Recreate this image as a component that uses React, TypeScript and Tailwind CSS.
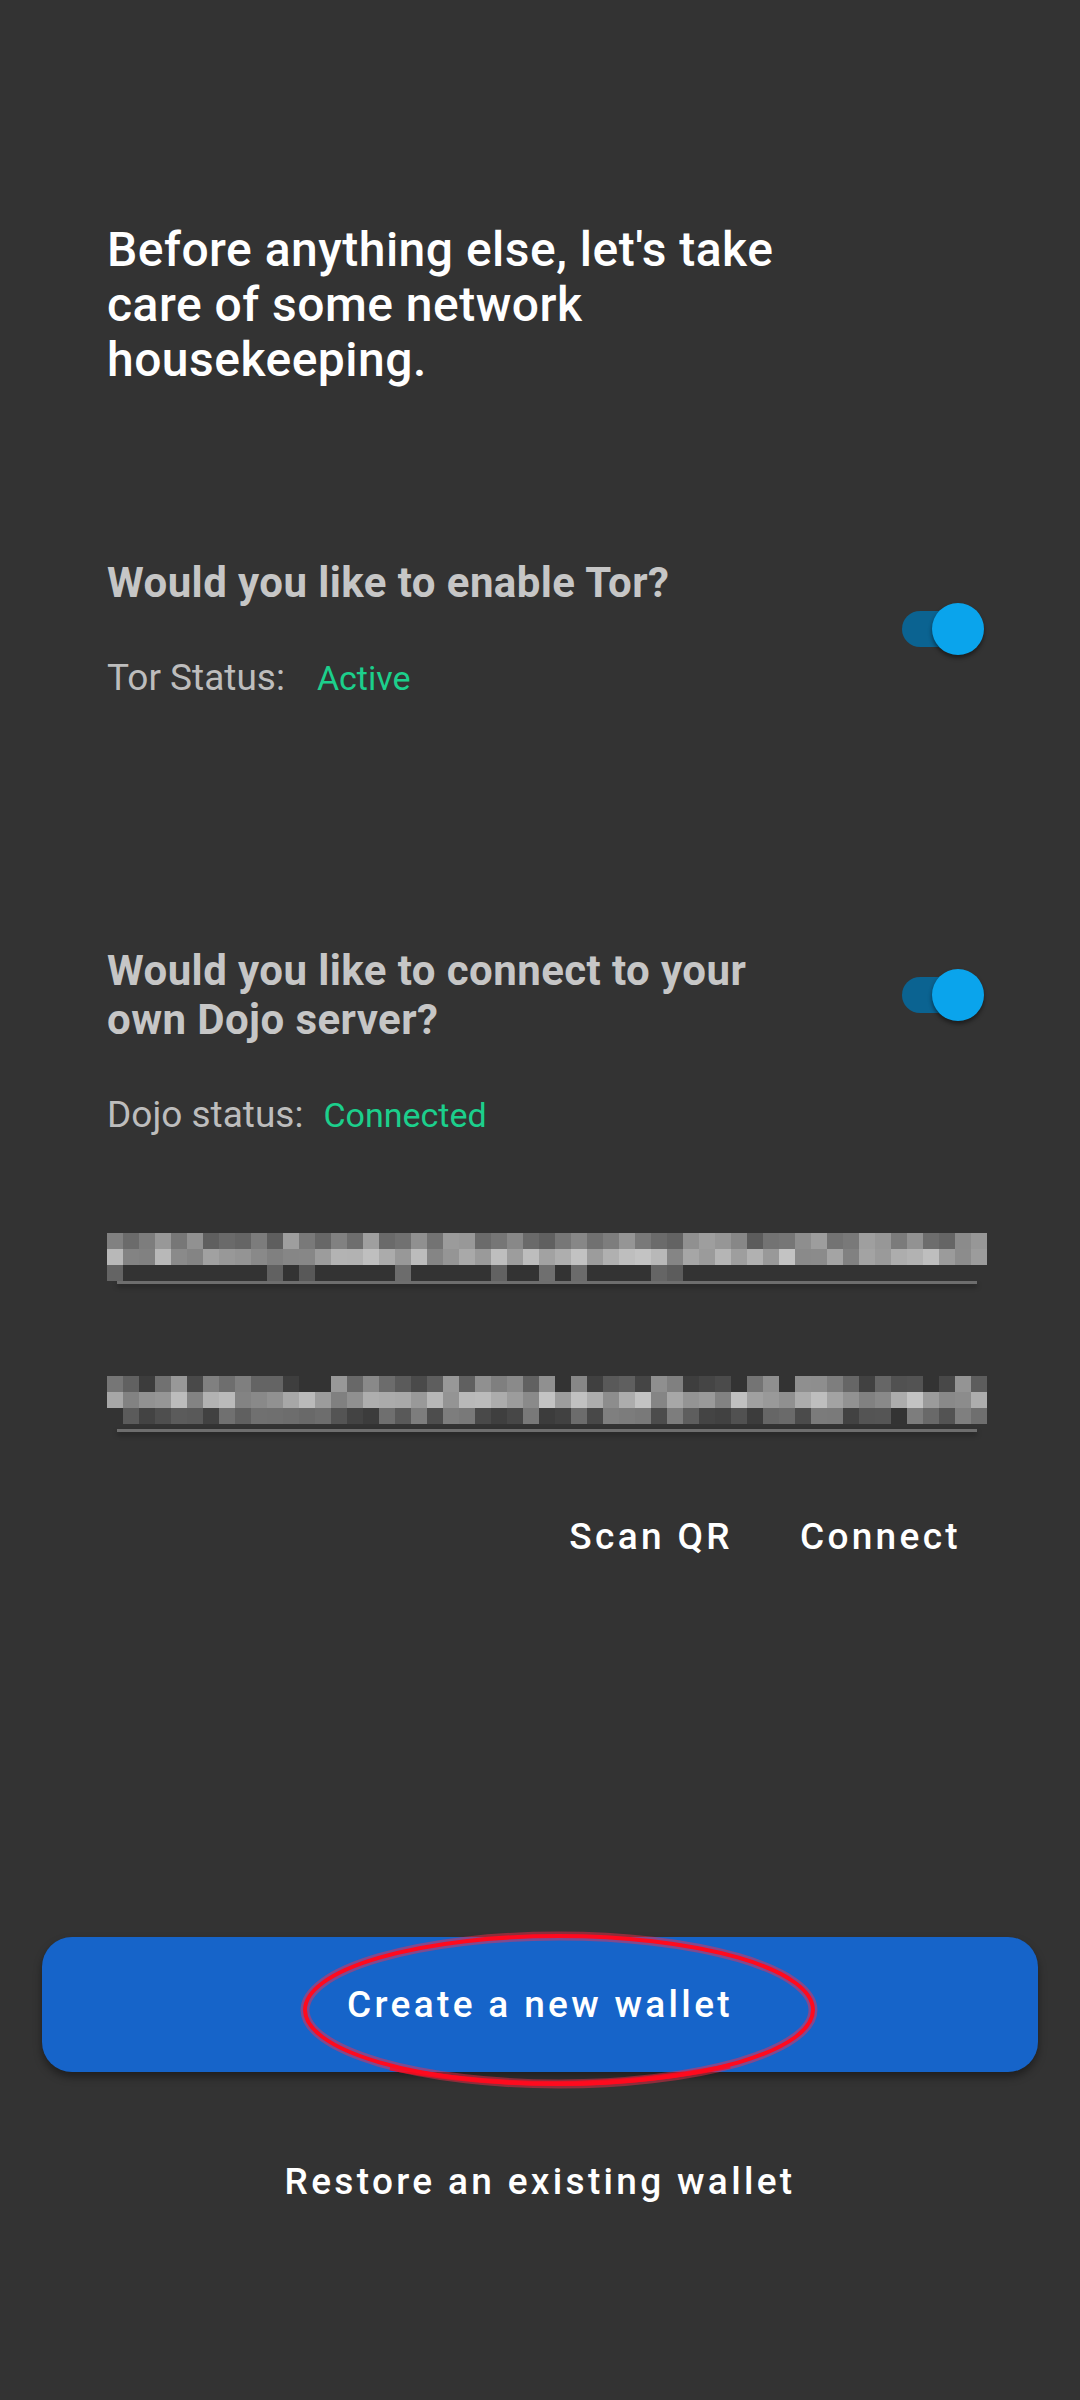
import React from 'react';

// deterministic noise for the blurred (pixelated) input values
function rand(seed: number) {
	let s = seed;
	return () => {
		s = (s * 9301 + 49297) % 233280;
		return s / 233280;
	};
}

function grayHex(v: number) {
	const h = Math.round(v).toString(16).padStart(2, '0');
	return `#${h}${h}${h}`;
}

function Pixelated({ seed, rows }: { seed: number; rows: [number, number, number, number][] }) {
	const r = rand(seed);
	return (
		<div className="flex flex-col">
			{rows.map(([min, max, emptyChance, cols], ri) => (
				<div key={ri} className="flex h-[16px]">
					{Array.from({ length: 55 }).map((_, ci) => {
						const empty = ci >= cols || r() < emptyChance;
						const v = empty ? 0x33 : min + r() * (max - min);
						return <div key={ci} className="w-[16px] h-[16px]" style={{ background: grayHex(v) }} />;
					})}
				</div>
			))}
		</div>
	);
}

function Toggle() {
	return (
		<div className="relative w-[82px] h-[52px] shrink-0">
			<div className="absolute left-0 top-[8px] h-[36px] w-[72px] rounded-full bg-[#0b6391]" />
			<div className="absolute right-0 top-0 h-[52px] w-[52px] rounded-full bg-[#0aa4ec] shadow-[0_3px_4px_rgba(0,0,0,0.45)]" />
		</div>
	);
}

export default function App() {
	return (
		<div className="min-h-[2400px] bg-[#333333] font-['Roboto',sans-serif]">
			<div className="pl-[107px] pr-[96px] pt-[222px]">
				<h1 className="w-[720px] text-[48px] leading-[55px] font-medium tracking-[0.01em] text-white">
					Before anything else, let's take care of some network housekeeping.
				</h1>

				<div className="flex items-center justify-between mt-[171px]">
					<div>
						<div className="text-[42px] leading-[49px] font-bold tracking-[0.01em] text-[#c6c6c6]">Would you like to enable Tor?</div>
						<div className="mt-[49px] text-[37px] leading-[43px] text-[#bdbdbd]">
							Tor Status:<span className="ml-[32px] text-[34px] text-[#1ccf8c]">Active</span>
						</div>
					</div>
					<Toggle />
				</div>

				<div className="flex items-center justify-between mt-[246px]">
					<div className="w-[690px] text-[42px] leading-[49px] font-bold tracking-[0.01em] text-[#c6c6c6]">
						Would you like to connect to your own Dojo server?
					</div>
					<Toggle />
				</div>
				<div className="mt-[49px] text-[37px] leading-[43px] text-[#bdbdbd]">
					Dojo status:<span className="ml-[20px] text-[34px] text-[#1ccf8c]">Connected</span>
				</div>

				<div className="mt-[96px] w-[880px]">
					<Pixelated seed={7} rows={[[0x5a, 0xa0, 0, 55], [0x80, 0xc4, 0, 55], [0x55, 0x70, 0.65, 37]]} />
					<div className="mx-[10px] h-[3px] bg-[#6e6e6e] shadow-[0_3px_5px_rgba(0,0,0,0.35)]" />
				</div>

				<div className="mt-[92px] w-[880px]">
					<Pixelated seed={31} rows={[[0x3a, 0x9a, 0.12, 55], [0x80, 0xc4, 0, 55], [0x3c, 0x80, 0.04, 55]]} />
					<div className="mt-[5px] mx-[10px] h-[3px] bg-[#6e6e6e] shadow-[0_3px_5px_rgba(0,0,0,0.35)]" />
				</div>

				<div className="mt-[83px] flex justify-end">
					<button className="pl-[25px] pr-[40px] text-[37px] leading-[43px] font-medium tracking-[0.09em] text-white">Scan QR</button>
					<button className="pl-[27px] pr-[23px] text-[37px] leading-[43px] font-medium tracking-[0.09em] text-white">Connect</button>
				</div>
			</div>

			<div className="px-[42px] mt-[379px]">
				<div className="relative">
					<button className="w-full h-[135px] rounded-[30px] bg-[#1664c9] text-[37px] font-medium tracking-[0.09em] text-white shadow-[0_5px_8px_rgba(0,0,0,0.4)]">
						Create a new wallet
					</button>
					<svg className="absolute left-[258px] top-[-7px] pointer-events-none" width="520" height="160" viewBox="0 0 520 160">
						<ellipse cx="259" cy="80" rx="254" ry="74" fill="none" stroke="#ff2a4a" strokeOpacity="0.45" strokeWidth="9" />
						<ellipse cx="259" cy="80" rx="254" ry="74" fill="none" stroke="#ff0a1e" strokeWidth="4" />
						<path d="M 90 138 Q 260 170 430 136" fill="none" stroke="#ff0a1e" strokeWidth="5" strokeOpacity="0.8" />
					</svg>
				</div>
				<div className="mt-[88px] text-center text-[37px] leading-[43px] font-medium tracking-[0.09em] text-white">
					Restore an existing wallet
				</div>
			</div>
		</div>
	);
}
